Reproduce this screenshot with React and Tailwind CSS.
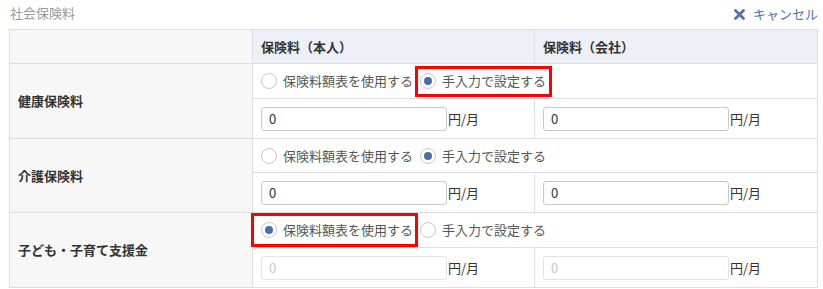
import React from "react";

const FONT = { fontFamily: '"Noto Sans CJK JP", "Noto Sans", sans-serif' };

function Radio({ checked, label, box }) {
  return (
    <span className="relative inline-flex items-center h-4">
      <span className="w-4 h-4 rounded-full border border-[#c8c8c8] bg-white flex items-center justify-center shrink-0">
        {checked && <span className="w-[8px] h-[8px] rounded-full bg-[#4a6cb0]" />}
      </span>
      <span className="ml-[6px] text-[13px] leading-4 text-[#555]">{label}</span>
      {box === "a" && (
        <span className="absolute left-[-5px] right-[-6px] top-[-7px] bottom-[-8px] border-[3px] border-[#ff0000] pointer-events-none" />
      )}
      {box === "b" && (
        <span className="absolute left-[-10px] right-[-5px] top-[-9px] bottom-[-9px] border-[3px] border-[#ff0000] pointer-events-none" />
      )}
    </span>
  );
}

function AmountCell({ disabled }) {
  return (
    <td className="border border-[#dedede] pl-2 align-middle">
      <div className="flex items-center">
        <input
          readOnly
          disabled={disabled}
          value="0"
          className={
            "w-[186px] h-[24px] rounded-[3px] border pl-[7px] text-[13px] outline-none " +
            (disabled
              ? "border-[#e3e3e3] text-[#c8c8c8] bg-white"
              : "border-[#c8c8c8] text-[#333] bg-white")
          }
          style={FONT}
        />
        <span className="ml-[1px] text-[13px] text-[#333]">円/月</span>
      </div>
    </td>
  );
}

function Group({ title, first, h1, boxA, boxB, disabled }) {
  return (
    <>
      <tr className={h1}>
        <th
          rowSpan={2}
          className="border border-[#dedede] bg-[#f7f7f7] text-left pl-2 text-[13px] font-bold text-[#333] align-middle"
        >
          {title}
        </th>
        <td colSpan={2} className="border border-[#dedede] pl-2 align-middle">
          <div className="flex items-center">
            <Radio checked={first} label="保険料額表を使用する" box={boxB} />
            <span className="w-[7px]" />
            <Radio checked={!first} label="手入力で設定する" box={boxA} />
          </div>
        </td>
      </tr>
      <tr className="h-[40px]">
        <AmountCell disabled={disabled} />
        <AmountCell disabled={disabled} />
      </tr>
    </>
  );
}

export default function App() {
  return (
    <div className="w-[823px] h-[289px] bg-white overflow-hidden" style={FONT}>
      <div className="flex items-center justify-between h-[29px] pl-[10px] pr-[5px]">
        <span className="text-[13px] text-[#9a9a9a] -mt-[3px]">社会保険料</span>
        <a className="flex items-center text-[13px] text-[#4f72ad] -mt-[1px]">
          <svg width="11" height="11" viewBox="0 0 11 11" className="mr-[8px]">
            <path d="M1.5 1.5 L9.5 9.5 M9.5 1.5 L1.5 9.5" stroke="#4f72ad" strokeWidth="2.8" strokeLinecap="round" />
          </svg>
          キャンセル
        </a>
      </div>
      <div className="pl-[9px]">
        <table className="border-collapse w-[808px] table-fixed border border-[#d4d4d4]">
          <colgroup>
            <col className="w-[243px]" />
            <col className="w-[282px]" />
            <col className="w-[283px]" />
          </colgroup>
          <thead>
            <tr className="h-[34px]">
              <th className="border border-[#dedede] bg-[#f7f7f7]" />
              <th className="border border-[#dedede] bg-[#edf0f7] text-left pl-2 text-[13px] font-bold text-[#333]">
                保険料（本人）
              </th>
              <th className="border border-[#dedede] bg-[#edf0f7] text-left pl-2 text-[13px] font-bold text-[#333]">
                保険料（会社）
              </th>
            </tr>
          </thead>
          <tbody>
            <Group title="健康保険料" first={false} h1="h-[35px]" boxA="a" />
            <Group title="介護保険料" first={false} h1="h-[34px]" />
            <Group title="子ども・子育て支援金" first={true} h1="h-[35px]" boxB="b" disabled />
          </tbody>
        </table>
      </div>
    </div>
  );
}
